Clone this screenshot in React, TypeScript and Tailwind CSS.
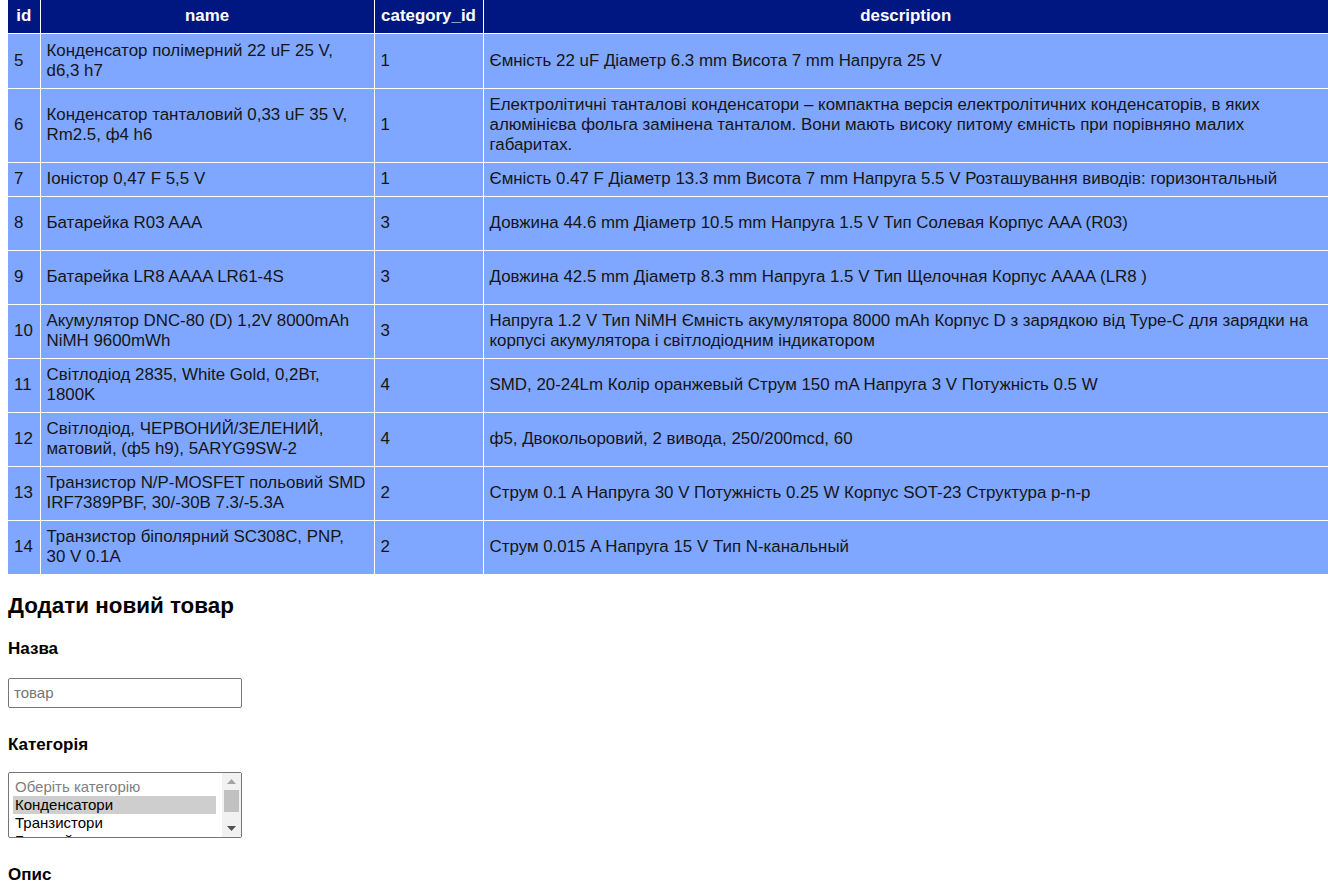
import React from "react";

const rows: { id: number; name: string[]; cat: number; desc: string; h: string }[] = [
  { id: 5, name: ["Конденсатор полімерний 22 uF 25 V,", "d6,3 h7"], cat: 1, desc: "Ємність 22 uF Діаметр 6.3 mm Висота 7 mm Напруга 25 V", h: "h-[55px]" },
  { id: 6, name: ["Конденсатор танталовий 0,33 uF 35 V,", "Rm2.5, ф4 h6"], cat: 1, desc: "Електролітичні танталові конденсатори – компактна версія електролітичних конденсаторів, в яких алюмінієва фольга замінена танталом. Вони мають високу питому ємність при порівняно малих габаритах.", h: "h-[74px]" },
  { id: 7, name: ["Іоністор 0,47 F 5,5 V"], cat: 1, desc: "Ємність 0.47 F Діаметр 13.3 mm Висота 7 mm Напруга 5.5 V Розташування виводів: горизонтальный", h: "h-[34px]" },
  { id: 8, name: ["Батарейка R03 AAA"], cat: 3, desc: "Довжина 44.6 mm Діаметр 10.5 mm Напруга 1.5 V Тип Солевая Корпус AAA (R03)", h: "h-[54px]" },
  { id: 9, name: ["Батарейка LR8 AAAA LR61-4S"], cat: 3, desc: "Довжина 42.5 mm Діаметр 8.3 mm Напруга 1.5 V Тип Щелочная Корпус AAAA (LR8 )", h: "h-[54px]" },
  { id: 10, name: ["Акумулятор DNC-80 (D) 1,2V 8000mAh", "NiMH 9600mWh"], cat: 3, desc: "Напруга 1.2 V Тип NiMH Ємність акумулятора 8000 mAh Корпус D з зарядкою від Type-C для зарядки на корпусі акумулятора і світлодіодним індикатором", h: "h-[54px]" },
  { id: 11, name: ["Світлодіод 2835, White Gold, 0,2Вт,", "1800K"], cat: 4, desc: "SMD, 20-24Lm Колір оранжевый Струм 150 mA Напруга 3 V Потужність 0.5 W", h: "h-[54px]" },
  { id: 12, name: ["Світлодіод, ЧЕРВОНИЙ/ЗЕЛЕНИЙ,", "матовий, (ф5 h9), 5ARYG9SW-2"], cat: 4, desc: "ф5, Двокольоровий, 2 вивода, 250/200mcd, 60", h: "h-[54px]" },
  { id: 13, name: ["Транзистор N/P-MOSFET польовий SMD", "IRF7389PBF, 30/-30B 7.3/-5.3A"], cat: 2, desc: "Струм 0.1 A Напруга 30 V Потужність 0.25 W Корпус SOT-23 Структура p-n-p", h: "h-[54px]" },
  { id: 14, name: ["Транзистор біполярний SC308C, PNP,", "30 V 0.1A"], cat: 2, desc: "Струм 0.015 A Напруга 15 V Тип N-канальный", h: "h-[54px]" },
];

const td = "border border-white px-[6px] py-[6px] align-middle text-left";
const th = "border border-white border-t-0 px-[6px] py-[6px] text-center font-bold text-white";

export default function App() {
  return (
    <div className="pl-2 bg-white text-black font-['Liberation_Sans',Arial,sans-serif] text-[16.9px] leading-[20px] min-h-[885px] w-[1328px] overflow-hidden">
      <table className="table-fixed border-collapse w-[1320px] border-l-0">
        <colgroup>
          <col className="w-[32px]" />
          <col className="w-[334px]" />
          <col className="w-[109px]" />
          <col className="w-[845px]" />
        </colgroup>
        <thead>
          <tr className="bg-[#001782] h-[33px]">
            <th className={th + " border-l-0"}>id</th>
            <th className={th}>name</th>
            <th className={th}>category_id</th>
            <th className={th + " border-r-0"}>description</th>
          </tr>
        </thead>
        <tbody>
          {rows.map((r) => (
            <tr key={r.id} className={"bg-[#80a7ff] text-[#151515] " + r.h}>
              <td className={td + " border-l-0"}>{r.id}</td>
              <td className={td + " whitespace-nowrap overflow-hidden"}>
                {r.name.map((l, i) => (
                  <div key={i}>{l}</div>
                ))}
              </td>
              <td className={td}>{r.cat}</td>
              <td className={td + " border-r-0"}>{r.desc}</td>
            </tr>
          ))}
        </tbody>
      </table>

      <h2 className="mt-[18px] text-[22.4px] leading-[26px] font-bold">Додати новий товар</h2>

      <h3 className="mt-[20px] text-[17px] leading-[20px] font-bold">Назва</h3>
      <div className="mt-[19px] w-[234px] h-[30px] border border-[#767676] rounded-[2px] flex items-center px-[5px] text-[15px] text-[#757575]">
        товар
      </div>

      <h3 className="mt-[27px] text-[17px] leading-[20px] font-bold">Категорія</h3>
      <div className="mt-[17px] w-[234px] h-[66px] border border-[#767676] rounded-[2px] flex overflow-hidden text-[15px] leading-[18px]">
        <div className="flex-1 pt-[5px] pl-[4px] pr-[6px] overflow-hidden">
          <div className="text-[#808080] pl-[2px]">Оберіть категорію</div>
          <div className="bg-[#cecece] text-black pl-[2px]">Конденсатори</div>
          <div className="text-black pl-[2px]">Транзистори</div>
          <div className="text-black pl-[2px]">Батарейки</div>
        </div>
        <div className="w-[19px] bg-[#f1f1f1] flex flex-col items-center">
          <div className="h-[17px] flex items-center justify-center">
            <svg width="9" height="5" viewBox="0 0 9 5"><polygon points="0,5 9,5 4.5,0" fill="#a3a3a3" /></svg>
          </div>
          <div className="w-[15px] h-[22px] bg-[#c1c1c1]" />
          <div className="flex-1" />
          <div className="h-[17px] flex items-center justify-center">
            <svg width="9" height="5" viewBox="0 0 9 5"><polygon points="0,0 9,0 4.5,5" fill="#505050" /></svg>
          </div>
        </div>
      </div>

      <h3 className="mt-[27px] text-[17px] leading-[20px] font-bold">Опис</h3>
    </div>
  );
}
